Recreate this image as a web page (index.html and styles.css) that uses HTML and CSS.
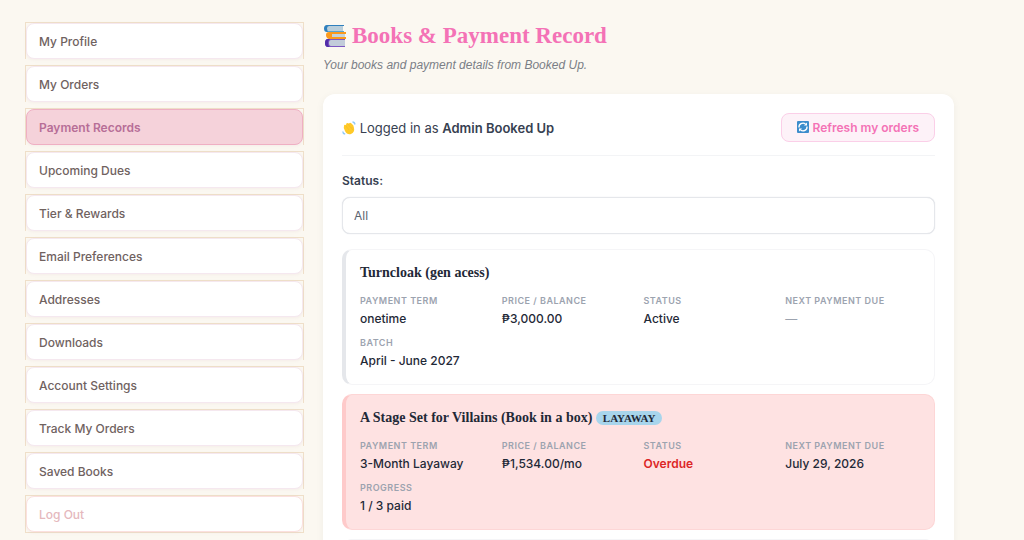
FILE: index.html
```html
<!DOCTYPE html>
<html lang="en">
<head>
    <meta charset="UTF-8">
    <meta name="viewport" content="width=device-width, initial-scale=1.0">
    <title>Books &amp; Payment Record</title>
    <link rel="stylesheet" href="styles.css">
</head>
<body>
    <div class="account">
        <nav class="account-nav" aria-label="Account">
            <ul>
                <li><a href="#">My Profile</a></li>
                <li><a href="#">My Orders</a></li>
                <li class="active"><a href="#" aria-current="page">Payment Records</a></li>
                <li><a href="#">Upcoming Dues</a></li>
                <li><a href="#">Tier &amp; Rewards</a></li>
                <li><a href="#">Email Preferences</a></li>
                <li><a href="#">Addresses</a></li>
                <li><a href="#">Downloads</a></li>
                <li><a href="#">Account Settings</a></li>
                <li><a href="#">Track My Orders</a></li>
                <li><a href="#">Saved Books</a></li>
                <li class="logout"><a href="#">Log Out</a></li>
            </ul>
        </nav>

        <main class="records">
            <h1>
                <svg class="icon-books" viewBox="0 0 24 24" aria-hidden="true">
                    <path d="M3 1h17v6H3z" fill="#b9cedb"/>
                    <path d="M21 1H4Q1 1 1 4.500T4 8h2Q4 7 4 4.500T6 2h15z" fill="#2f80bd"/>
                    <path d="M5 7h16v1H5z" fill="#5ba3d0"/>
                    <path d="M8 10h14v3H8z" fill="#c5d3dc"/>
                    <path d="M23 8H6Q3 8 3 11t3 4h17v-2H9v-3h14z" fill="#fb9a1c"/>
                    <path d="M6 16h16v7H6z" fill="#c2ccda"/>
                    <path d="M22 15H5q-3 0-3 4t3 4h17v-1H8q-2 0-2-3t2-3h14z" fill="#7e57c2"/>
                    <path d="M5 15q-3 0-3 4t3 4h2q-2-1-2-4t2-4z" fill="#512da8"/>
                </svg>
                Books &amp; Payment Record
            </h1>
            <p class="subtitle">Your books and payment details from Booked Up.</p>

            <section class="panel">
                <div class="panel-header">
                    <div class="user">
                        <svg class="icon-wave" viewBox="0 0 14 14" aria-hidden="true">
                            <path d="M2 5Q2 3 4 4Q4 1 7 2.500Q8 1 9.500 2.500Q12 4 12 7q1 4-3 6-4 1-6-3-2-3-1-5z" fill="#ffca28"/>
                            <path d="M4 5l3 4M6 3l3 4M10 6q-1 2 1 3" fill="none" stroke="#f3b52c" stroke-width=".6"/>
                            <path d="M10.500 1q2 0 2.500 2.500M.8 10.500q0 2 2.400 2.700" fill="none" stroke="#90caf9" stroke-width="1.400"/>
                        </svg>
                        Logged in as <strong>Admin Booked Up</strong>
                    </div>
                    <button type="button" class="refresh">
                        <svg class="icon-refresh" viewBox="0 0 12 12" aria-hidden="true">
                            <rect width="12" height="12" rx="1" fill="#3c8dcc"/>
                            <path d="M2 6.500A4 4 0 0 1 8.500 3M10 5.500A4 4 0 0 1 3.500 9" fill="none" stroke="#fff" stroke-width="1.300"/>
                            <path d="M10 1.500v3H7zM2 10.500v-3h3z" fill="#fff"/>
                        </svg>
                        Refresh my orders
                    </button>
                </div>

                <label for="status">Status:</label>
                <select id="status">
                    <option>All</option>
                    <option>Active</option>
                    <option>Overdue</option>
                </select>

                <article class="order">
                    <h2>Turncloak (gen acess)</h2>
                    <dl>
                        <div><dt>Payment Term</dt><dd>onetime</dd></div>
                        <div><dt>Price / Balance</dt><dd>₱3,000.00</dd></div>
                        <div><dt>Status</dt><dd>Active</dd></div>
                        <div><dt>Next Payment Due</dt><dd class="none">—</dd></div>
                        <div><dt>Batch</dt><dd>April - June 2027</dd></div>
                    </dl>
                </article>

                <article class="order overdue">
                    <h2>A Stage Set for Villains (Book in a box) <span class="badge">LAYAWAY</span></h2>
                    <dl>
                        <div><dt>Payment Term</dt><dd>3-Month Layaway</dd></div>
                        <div><dt>Price / Balance</dt><dd>₱1,534.00/mo</dd></div>
                        <div><dt>Status</dt><dd class="late">Overdue</dd></div>
                        <div><dt>Next Payment Due</dt><dd>July 29, 2026</dd></div>
                        <div><dt>Progress</dt><dd>1 / 3 paid</dd></div>
                    </dl>
                </article>

                <article class="order"></article>
            </section>
        </main>
    </div>
</body>
</html>
```
FILE: styles.css
```css
* {
    box-sizing: border-box;
}
html {
    height: 100%;
    overflow: hidden;
}
body {
    margin: 0;
    height: 100%;
    overflow: hidden;
    background-color: #fbf8f1;
    color: #374151;
    font-family: Inter, "Liberation Sans", sans-serif;
    font-size: 13px;
}
.account {
    display: grid;
    grid-template-columns: 279px 1fr;
    gap: 19px;
    padding: 22px 70px 0 25px;
}

/* sidebar */
.account-nav ul {
    list-style: none;
    margin: 0;
    padding: 0;
    display: flex;
    flex-direction: column;
    gap: 6px;
}
.account-nav li {
    border: 1px solid #efdfc9;
    border-bottom: none;
}
.account-nav a {
    display: block;
    padding: 9px 12px 8px;
    line-height: 17px;
    color: #70625f;
    font-size: 12px;
    font-weight: 500;
    text-decoration: none;
    background-color: #fff;
    border: 1px solid #f5e8ef;
    border-radius: 8px;
    box-shadow: 0 1px 3px rgba(200, 150, 180, 0.1);
}
.account-nav .active a {
    background-color: #f5d2da;
    border-color: #efafc3;
    color: #b76e97;
    font-weight: 600;
}
.account-nav .logout {
    border-bottom: 1px solid #efdfc9;
}
.account-nav .logout a {
    color: #e5b8bd;
    border-color: #fbe0df;
}

/* content */
.records {
    min-width: 0;
}
h1 {
    display: flex;
    align-items: center;
    gap: 5px;
    margin: 0 0 7px;
    color: #f472b6;
    font-family: "Liberation Serif", serif;
    font-size: 23px;
    line-height: 27px;
}
.icon-books {
    width: 24px;
    height: 24px;
}
.subtitle {
    margin: 0 0 20px;
    color: #7a7e86;
    font-family: "Liberation Sans", sans-serif;
    font-size: 12px;
    font-style: italic;
    line-height: 18px;
}
.panel {
    padding: 19px;
    background-color: #fff;
    border-radius: 12px;
    box-shadow: 0 2px 8px rgba(0, 0, 0, 0.05);
}
.panel-header {
    display: flex;
    justify-content: space-between;
    align-items: center;
    padding-bottom: 13px;
    margin-bottom: 16px;
    border-bottom: 1px solid #f3f4f6;
}
.user {
    line-height: 20px;
}
.user strong {
    font-weight: 600;
}
.icon-wave {
    width: 14px;
    height: 14px;
    vertical-align: -2px;
}
.refresh {
    padding: 5px 15px;
    background-color: #fdf2f8;
    border: 1px solid #fbcfe8;
    border-radius: 8px;
    color: #f472b6;
    font-family: inherit;
    font-size: 12px;
    font-weight: 600;
    line-height: 17px;
    cursor: pointer;
}
.icon-refresh {
    width: 12px;
    height: 12px;
    margin-right: 1px;
    vertical-align: -1px;
}
label {
    display: block;
    margin-bottom: 8px;
    font-size: 12px;
    font-weight: 600;
    line-height: 17px;
}
select {
    display: block;
    width: 100%;
    height: 37px;
    margin-bottom: 15px;
    padding: 0 11px;
    appearance: none;
    background-color: #fff;
    border: 1px solid #e5e7eb;
    border-radius: 8px;
    box-shadow: 0 0 1px #d5d8de;
    color: #5b6370;
    font-family: inherit;
    font-size: 12px;
}
.order {
    min-height: 60px;
    margin-bottom: 9px;
    padding: 14px 17px 14px 14px;
    border: 1px solid #f5f5f7;
    border-left: 4px solid #e5e7eb;
    border-radius: 10px;
}
.order.overdue {
    background-color: #fee2e2;
    border-color: #fdd6d6;
    border-left-color: #fecaca;
}
h2 {
    margin: 0 0 11px;
    color: #1f2937;
    font-family: "Liberation Serif", serif;
    font-size: 14px;
    line-height: 18px;
}
.badge {
    padding: 1px 7px;
    background-color: #a8d5ec;
    border-radius: 8px;
    font-size: 11px;
}
dl {
    display: grid;
    grid-template-columns: repeat(4, 1fr);
    gap: 7px 10px;
    margin: 0;
}
dt {
    color: #9ca3af;
    font-size: 9px;
    font-weight: 600;
    line-height: 16px;
    letter-spacing: 0.5px;
    text-transform: uppercase;
}
dd {
    margin: 1px 0 0;
    color: #1f2937;
    font-size: 12px;
    font-weight: 500;
    line-height: 18px;
}
dd.none {
    color: #9ca3af;
}
dd.late {
    color: #dc2626;
    font-weight: 600;
}
```
